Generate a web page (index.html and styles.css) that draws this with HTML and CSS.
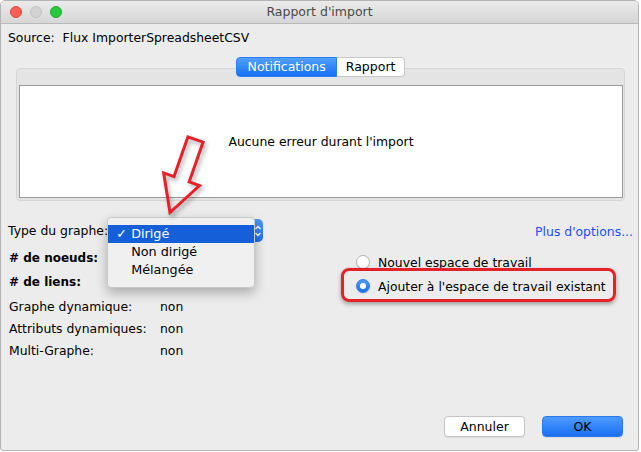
FILE: index.html
```html
<!DOCTYPE html>
<html lang="fr">
<head>
    <meta charset="UTF-8">
    <meta name="viewport" content="width=device-width, initial-scale=1.0">
    <title>Rapport d'import</title>
    <link rel="stylesheet" href="styles.css">
</head>
<body>
    <div class="window">
        <div class="titlebar">
            <div class="lights">
                <span class="light red"></span>
                <span class="light gray"></span>
                <span class="light green"></span>
            </div>
            <div class="title">Rapport d'import</div>
        </div>

        <div class="content">
            <div class="source">Source:&nbsp; Flux ImporterSpreadsheetCSV</div>

            <div class="tabs">
                <span class="tab active">Notifications</span>
                <span class="tab">Rapport</span>
            </div>
            <div class="panel">
                <div class="panel-body">Aucune erreur durant l'import</div>
            </div>

            <div class="options">
                <div class="col-left">
                    <div class="type-row">
                        <span>Type du graphe:</span>
                        <div class="popup">
                            <svg class="stepper" width="8" height="14" viewBox="0 0 8 14">
                                <path d="M1.5 5 L4 2.5 L6.5 5 M1.5 9 L4 11.5 L6.5 9" fill="none" stroke="#fff" stroke-width="1.4"/>
                            </svg>
                            <div class="menu">
                                <div class="menu-item selected"><span class="check">✓</span>Dirigé</div>
                                <div class="menu-item">Non dirigé</div>
                                <div class="menu-item">Mélangée</div>
                            </div>
                        </div>
                    </div>
                    <div class="stats">
                        <div class="stat">#&nbsp;de noeuds:</div>
                        <div class="stat">#&nbsp;de liens:</div>
                    </div>
                    <div class="flags">
                        <div class="flag"><span class="flag-name">Graphe dynamique:</span><span>non</span></div>
                        <div class="flag"><span class="flag-name">Attributs dynamiques:</span><span>non</span></div>
                        <div class="flag"><span class="flag-name">Multi-Graphe:</span><span>non</span></div>
                    </div>
                </div>

                <div class="col-right">
                    <div class="more">Plus d'options...</div>
                    <div class="radio-row"><span class="radio"></span>Nouvel espace de travail</div>
                    <div class="radio-row">
                        <span class="radio checked"><span class="dot"></span></span>Ajouter à l'espace de travail existant
                        <span class="ring"></span>
                    </div>
                </div>
            </div>

            <div class="buttons">
                <span class="btn">Annuler</span>
                <span class="btn primary">OK</span>
            </div>
        </div>

        <!-- flèche d'annotation -->
        <svg class="arrow" width="70" height="100" viewBox="0 0 70 100">
            <polygon points="37.9,11.9 53.1,17.1 39.2,56.8 49.5,60.5 20,87.5 13.7,47.9 24,51.6" fill="none" stroke="#e8202a" stroke-width="3"/>
        </svg>
    </div>
</body>
</html>
```

FILE: styles.css
```css
*{padding: 0;margin: 0;box-sizing: border-box;}
body{
    background: #fff;
    font-family: "DejaVu Sans", "Liberation Sans", sans-serif;
    font-size: 12.4px;
    color: #000;
}
.window{
    position: relative;
    width: 639px;
    height: 451px;
    border: 1px solid #b4b4b4;
    border-radius: 5px 5px 3px 3px;
    background: #ececec;
    display: flex;
    flex-direction: column;
    overflow: hidden;
}

/* barre de titre */
.titlebar{
    height: 23px;
    border-bottom: 1px solid #b9b9b9;
    background: linear-gradient(#ebebeb, #d6d6d6);
    display: grid;
    grid-template-columns: 1fr auto 1fr;
    align-items: center;
}
.lights{
    display: flex;
    gap: 8px;
    padding-left: 9px;
}
.light{
    width: 12px;
    height: 12px;
    border-radius: 50%;
}
.light.red{background: #fd5f57;border: 1px solid #e14640;}
.light.gray{background: #d2d2d2;border: 1px solid #c2c2c2;}
.light.green{background: #28c840;border: 1px solid #1ea832;}
.title{
    font-size: 12.5px;
    color: #4a4a4a;
    line-height: 22px;
}

.content{
    flex: 1;
    display: flex;
    flex-direction: column;
    padding: 0 4px 13px 7px;
}
.source{
    margin-top: 6px;
    line-height: 16px;
}

/* onglets */
.tabs{
    position: relative;
    z-index: 1;
    display: flex;
    justify-content: center;
    margin-top: 11px;
    margin-bottom: -9px;
    margin-left: 8px;
    margin-right: 9px;
}
.tab{
    height: 20px;
    line-height: 18px;
    padding: 0 9px;
    font-size: 12.5px;
    background: #fff;
    border: 1px solid #c6c6c6;
    border-left: none;
    border-radius: 0 4px 4px 0;
}
.tab.active{
    color: #fff;
    background: linear-gradient(#52a0ff, #1670f6);
    border: 1px solid #2a7cf2;
    border-radius: 4px 0 0 4px;
    padding: 0 10px 0 11px;
}
.panel{
    margin-left: 8px;
    margin-right: 9px;
    background: #e4e4e4;
    border: 1px solid #d6d6d6;
    border-radius: 4px;
    padding: 16px 1px 2px 2px;
}
.panel-body{
    height: 113px;
    background: #fff;
    border: 1px solid #9b9b9b;
    display: flex;
    align-items: center;
    justify-content: center;
}

/* options */
.options{
    display: flex;
    margin-top: 18px;
}
.col-left{
    flex: 1;
}
.type-row{
    height: 23px;
    display: flex;
    align-items: center;
}
.popup{
    position: relative;
    width: 155px;
    height: 23px;
    border-radius: 5px;
    background: linear-gradient(#4d9bff, #1a6ff2);
    display: flex;
    align-items: center;
    justify-content: flex-end;
    padding-right: 1px;
}
.menu{
    position: absolute;
    left: -1px;
    top: -2px;
    width: 148px;
    height: 71px;
    background: #f0f0f0;
    border: 1px solid #c9c9c9;
    border-radius: 4px;
    box-shadow: 0 5px 12px rgba(0,0,0,.28);
    padding-top: 7px;
    font-size: 12.8px;
}
.menu-item{
    height: 18px;
    line-height: 18px;
    padding-left: 23px;
    position: relative;
}
.menu-item.selected{
    background: #155fd9;
    color: #fff;
}
.check{
    position: absolute;
    left: 8px;
    font-weight: bold;
}
.stats{
    margin-top: 4px;
    font-weight: bold;
    font-size: 12px;
}
.stat{
    line-height: 24px;
    padding-left: 1px;
}
.flags{
    margin-top: 2px;
}
.flag{
    display: flex;
    line-height: 22px;
    padding-left: 1px;
}
.flag-name{
    width: 151px;
}

.col-right{
    width: 278px;
}
.more{
    margin-top: 2px;
    line-height: 22px;
    text-align: right;
    padding-right: 1px;
    color: #1c4cf5;
}
.radio-row{
    position: relative;
    height: 24px;
    display: flex;
    align-items: center;
    gap: 8px;
}
.more + .radio-row{
    margin-top: 7px;
}
.radio{
    width: 14px;
    height: 14px;
    border-radius: 50%;
    background: #fff;
    border: 1px solid #b3b3b3;
    box-shadow: 0 1px 1px rgba(0,0,0,.1);
    display: flex;
    align-items: center;
    justify-content: center;
}
.radio.checked{
    background: linear-gradient(#4d9bff, #1a6ff2);
    border-color: #2f79ee;
}
.dot{
    width: 6px;
    height: 6px;
    border-radius: 50%;
    background: #fff;
}
.ring{
    position: absolute;
    left: -15px;
    top: -6px;
    width: 275px;
    height: 34px;
    border: 3px solid #e5222b;
    border-radius: 8px;
    box-shadow: 0 2px 4px rgba(0,0,0,.35);
}

/* boutons */
.buttons{
    margin-top: auto;
    display: flex;
    justify-content: flex-end;
    gap: 17px;
    margin-right: 11px;
}
.btn{
    width: 81px;
    height: 21px;
    line-height: 19px;
    text-align: center;
    font-size: 12.5px;
    background: #fff;
    border: 1px solid #c4c4c4;
    border-radius: 4px;
    box-shadow: 0 1px 1px rgba(0,0,0,.08);
}
.btn.primary{
    background: linear-gradient(#4d9bff, #1a6ff2);
    border-color: #2a78ef;
}

.arrow{
    position: absolute;
    left: 149px;
    top: 124px;
    filter: drop-shadow(2px 3px 2px rgba(0,0,0,.3));
}
```
